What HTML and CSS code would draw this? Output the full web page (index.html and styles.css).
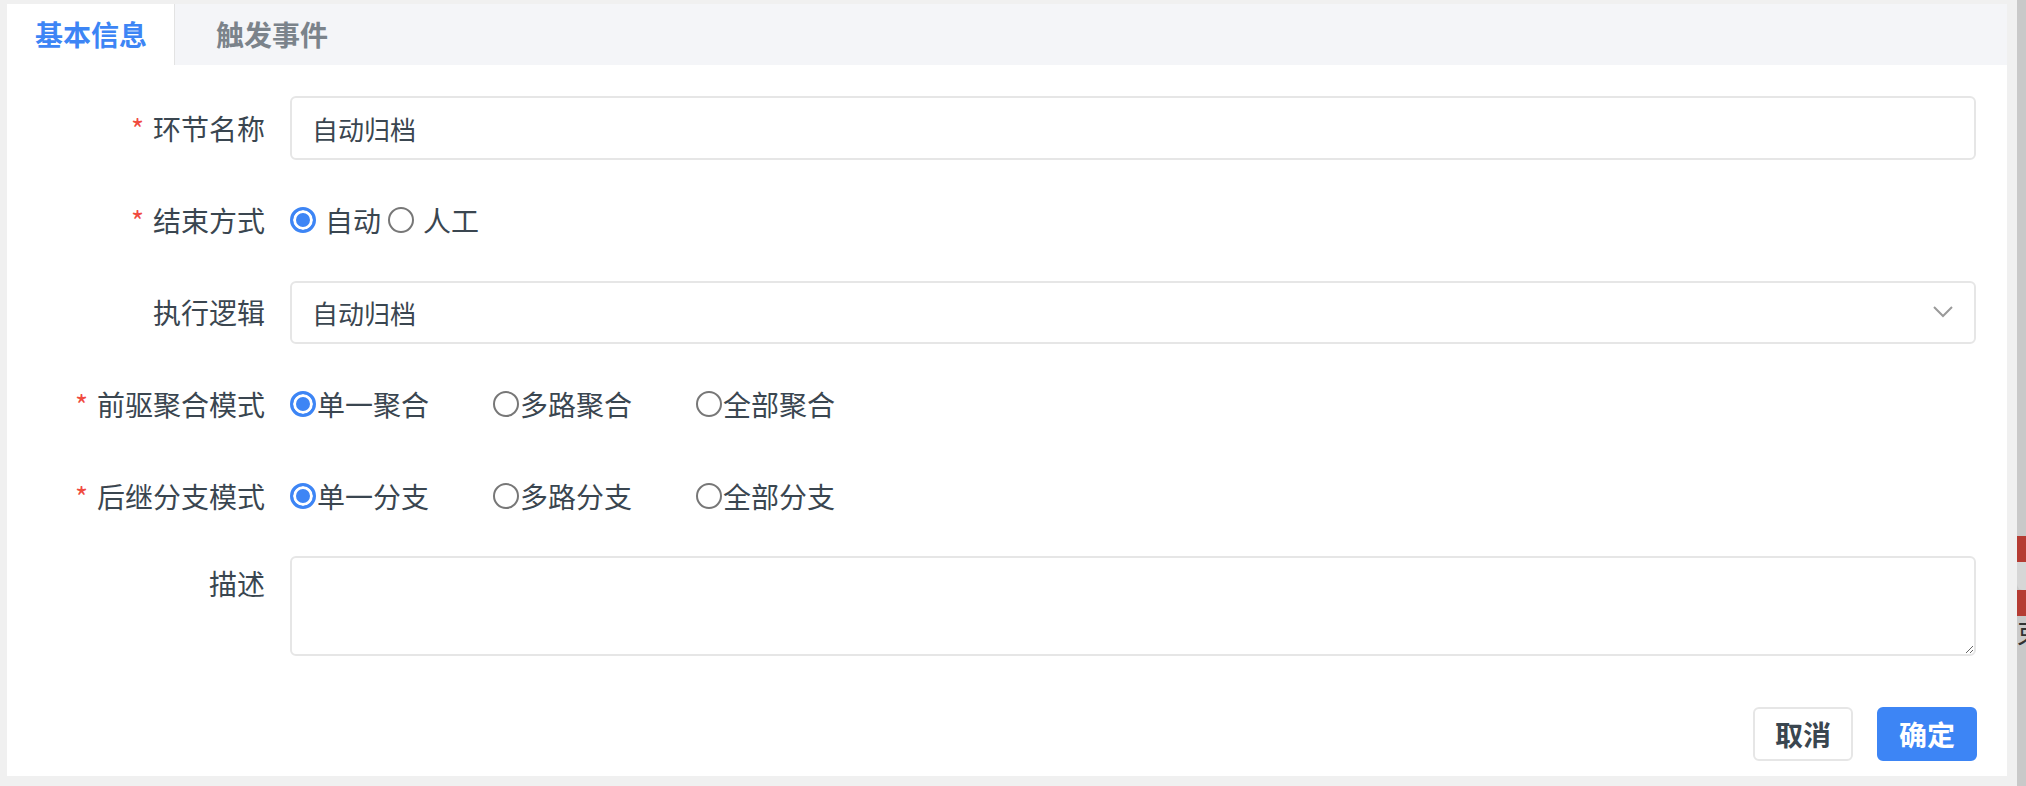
FILE: index.html
```html
<!DOCTYPE html>
<html lang="zh-CN">
<head>
    <meta charset="UTF-8">
    <meta name="viewport" content="width=device-width, initial-scale=1.0">
    <title>环节设置</title>
    <link rel="stylesheet" href="styles.css">
</head>
<body>
    <div class="dialog">
        <div class="tabs">
            <div class="tab active">基本信息</div>
            <div class="tab">触发事件</div>
        </div>

        <form class="form">
            <div class="form-item">
                <label class="form-label required" for="name">环节名称</label>
                <div class="form-control">
                    <input class="input" type="text" id="name" value="自动归档">
                </div>
            </div>
            <div class="form-item">
                <label class="form-label required">结束方式</label>
                <div class="form-control">
                    <label class="radio-inline"><input type="radio" name="end" checked>自动</label>
                    <label class="radio-inline"><input type="radio" name="end">人工</label>
                </div>
            </div>
            <div class="form-item">
                <label class="form-label">执行逻辑</label>
                <div class="form-control">
                    <div class="select">
                        <span>自动归档</span>
                        <svg width="20" height="12" viewBox="0 0 20 12"><polyline points="1,1 10,10 19,1" fill="none" stroke="#9a9a9a" stroke-width="2"/></svg>
                    </div>
                </div>
            </div>
            <div class="form-item">
                <label class="form-label required">前驱聚合模式</label>
                <div class="form-control">
                    <label class="radio-option"><input type="radio" name="join" checked>单一聚合</label>
                    <label class="radio-option"><input type="radio" name="join">多路聚合</label>
                    <label class="radio-option"><input type="radio" name="join">全部聚合</label>
                </div>
            </div>
            <div class="form-item">
                <label class="form-label required">后继分支模式</label>
                <div class="form-control">
                    <label class="radio-option"><input type="radio" name="split" checked>单一分支</label>
                    <label class="radio-option"><input type="radio" name="split">多路分支</label>
                    <label class="radio-option"><input type="radio" name="split">全部分支</label>
                </div>
            </div>
            <div class="form-item">
                <label class="form-label form-label-top" for="desc">描述</label>
                <div class="form-control">
                    <textarea class="textarea" id="desc"></textarea>
                </div>
            </div>
        </form>

        <div class="footer">
            <button type="button" class="btn">取消</button>
            <button type="button" class="btn btn-primary">确定</button>
        </div>
    </div>

    <div class="backdrop">
        <div class="peek-red"></div>
        <div class="peek-gap"></div>
        <div class="peek-red"></div>
        <div class="peek-text">束</div>
    </div>
</body>
</html>
```

FILE: styles.css
```css
* {
    box-sizing: border-box;
}
body {
    margin: 0;
    height: 786px;
    display: flex;
    overflow: hidden;
    background-color: #f0f0f0;
    font-family: "Noto Sans CJK SC", sans-serif;
    color: #3a4650;
}
.dialog {
    width: 2000px;
    height: 772px;
    margin: 4px 10px 0 7px;
    background: #fff;
    display: flex;
    flex-direction: column;
}
.tabs {
    height: 61px;
    display: flex;
    gap: 13px;
    background: #f4f5f8;
}
.tab {
    padding: 0 28px;
    line-height: 61px;
    font-size: 28px;
    font-weight: bold;
    color: #7b838b;
}
.tab.active {
    padding-right: 27px;
    background: #fff;
    color: #3d85f5;
    border-right: 1px solid #e3e3e3;
}
.form {
    padding: 31px 31px 0 0;
}
.form-item {
    display: flex;
    align-items: flex-start;
    margin-bottom: 28px;
}
.form-label {
    width: 283px;
    flex-shrink: 0;
    padding-right: 25px;
    text-align: right;
    font-size: 28px;
    line-height: 64px;
}
.form-label-top {
    line-height: 54px;
}
.form-label.required::before {
    content: "*";
    color: #f04b3f;
    margin-right: 9px;
}
.form-control {
    flex: 1;
    min-height: 64px;
    display: flex;
    align-items: center;
    font-size: 28px;
}
.input, .select, .textarea {
    width: 100%;
    border: 2px solid #e6e6e6;
    border-radius: 6px;
    font-family: inherit;
    font-size: 26px;
    color: #3a4650;
    background: #fff;
}
.input {
    height: 64px;
    padding: 0 20px;
    outline: none;
}
.select {
    height: 63px;
    padding: 0 21px 0 20px;
    display: flex;
    align-items: center;
    justify-content: space-between;
}
.textarea {
    height: 100px;
    padding: 12px 20px;
    outline: none;
}
.radio-inline, .radio-option {
    display: flex;
    align-items: center;
}
.radio-inline {
    margin-right: 7px;
}
.radio-inline input {
    margin: 0 9px 0 0;
}
.radio-option {
    width: 203px;
}
.radio-option input {
    margin: 0 1px 0 0;
}
input[type="radio"] {
    appearance: none;
    width: 26px;
    height: 26px;
    flex-shrink: 0;
    border: 2px solid #777;
    border-radius: 50%;
    background: #fff;
}
input[type="radio"]:checked {
    border: 3px solid #3d85f5;
    background: #3d85f5;
    box-shadow: inset 0 0 0 3px #fff;
}
.footer {
    display: flex;
    justify-content: flex-end;
    gap: 24px;
    padding: 23px 30px 0 0;
}
.btn {
    width: 100px;
    height: 54px;
    border: 2px solid #e6e6e6;
    border-radius: 6px;
    background: #fff;
    font-family: inherit;
    font-size: 28px;
    font-weight: bold;
    color: #3a4650;
    cursor: pointer;
}
.btn-primary {
    border-color: #3d85f5;
    background: #3d85f5;
    color: #fff;
}
.backdrop {
    flex: 1;
    padding-top: 536px;
    background: #c9c9c9;
    overflow: hidden;
}
.peek-red {
    height: 26px;
    background: #b53c33;
}
.peek-gap {
    height: 28px;
    background: #d6d6d6;
    border-radius: 0 0 0 6px;
}
.peek-text {
    font-size: 28px;
    line-height: 32px;
    color: #333;
    white-space: nowrap;
}
```
